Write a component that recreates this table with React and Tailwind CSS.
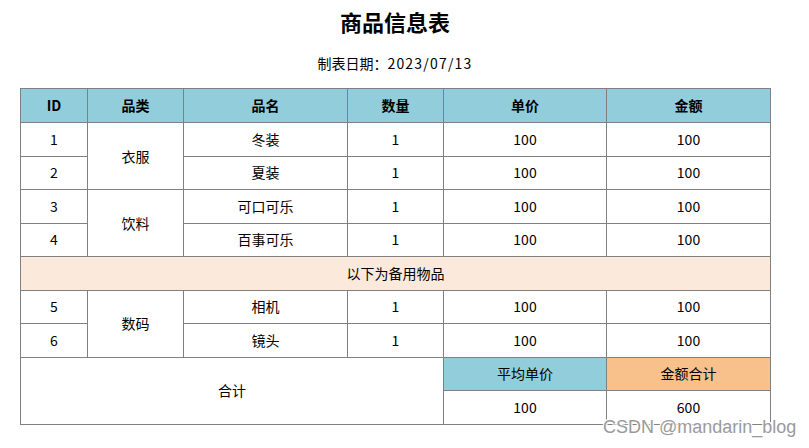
import React from "react";

const font = { fontFamily: '"Noto Sans CJK SC", "Noto Sans", sans-serif' };

function Td({ children, className = "", ...rest }) {
  return (
    <td
      className={`border border-[#808080] text-center text-[14px] text-black p-0 ${className}`}
      {...rest}
    >
      {children}
    </td>
  );
}

export default function App() {
  const rows1 = [
    ["1", "衣服", "冬装"],
    ["2", null, "夏装"],
    ["3", "饮料", "可口可乐"],
    ["4", null, "百事可乐"],
  ];
  const rows2 = [
    ["5", "数码", "相机"],
    ["6", null, "镜头"],
  ];
  const renderRow = (r) => (
    <tr key={r[0]} className="h-[33.5px]">
      <Td>{r[0]}</Td>
      {r[1] && <Td rowSpan={2}>{r[1]}</Td>}
      <Td>{r[2]}</Td>
      <Td>1</Td>
      <Td>100</Td>
      <Td>100</Td>
    </tr>
  );
  return (
    <div className="relative w-[809px] h-[448px] bg-white overflow-hidden" style={font}>
      <div className="w-[750px] ml-[20px]">
        <h1 className="text-[22px] font-bold text-black text-center leading-[22px] pt-[10px] h-[48px]">
          商品信息表
        </h1>
        <p className="text-[14px] text-black text-center leading-[20px] mt-[5px] h-[35px]">
          制表日期：<span className="tracking-[1.2px]">2023/07/13</span>
        </p>
        <table className="border-collapse w-[750px] table-fixed">
          <colgroup>
            <col className="w-[67px]" />
            <col className="w-[96px]" />
            <col className="w-[164px]" />
            <col className="w-[96px]" />
            <col className="w-[163px]" />
            <col className="w-[164px]" />
          </colgroup>
          <thead>
            <tr className="h-[34px] bg-[#92cddc]">
              {["ID", "品类", "品名", "数量", "单价", "金额"].map((h) => (
                <Td key={h} className="font-bold">
                  {h}
                </Td>
              ))}
            </tr>
          </thead>
          <tbody>
            {rows1.map(renderRow)}
            <tr className="h-[33.5px] bg-[#fbeadb]">
              <Td colSpan={6}>以下为备用物品</Td>
            </tr>
            {rows2.map(renderRow)}
            <tr className="h-[33.5px]">
              <Td colSpan={4} rowSpan={2}>
                合计
              </Td>
              <Td className="bg-[#92cddc]">平均单价</Td>
              <Td className="bg-[#f8c08a]">金额合计</Td>
            </tr>
            <tr className="h-[33.5px]">
              <Td>100</Td>
              <Td>600</Td>
            </tr>
          </tbody>
        </table>
      </div>
      <div
        className="absolute left-[603px] top-[417px] text-[18px] leading-[21px] text-[#9a9a9a]"
        style={{
          fontFamily: '"Liberation Sans", Arial, sans-serif',
          textShadow: "1px 1px 0 #fff, -1px -1px 0 #fff, 1px -1px 0 #fff, -1px 1px 0 #fff",
        }}
      >
        CSDN @mandarin_blog
      </div>
    </div>
  );
}
